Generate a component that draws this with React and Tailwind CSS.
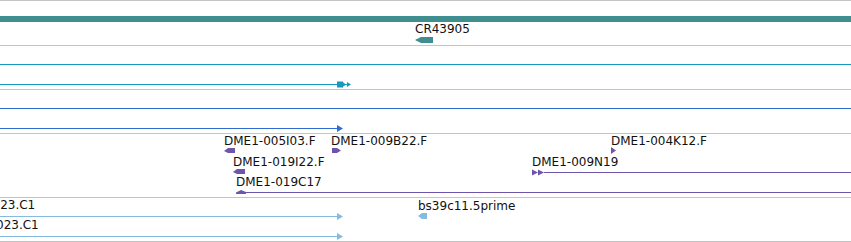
import React from 'react';

// feature label on the track canvas
function Label({ className, children }) {
  return (
    <div className={'absolute whitespace-nowrap text-[12px] leading-[12px] text-[#111] ' + className}>
      {children}
    </div>
  );
}

// small feature glyphs (arrows) drawn as svg
function Glyph({ className, w, h, fill, children }) {
  return (
    <svg className={'absolute ' + className} width={w} height={h} viewBox={`0 0 ${w} ${h}`} fill={fill}>
      {children}
    </svg>
  );
}

function Track({ className, children }) {
  return <div className={'relative overflow-hidden border-b border-[#c4c4c4] ' + className}>{children}</div>;
}

export default function App() {
  return (
    <div className="flex flex-col w-[851px] h-[242px] overflow-hidden bg-white border-t border-[#c4c4c4] font-['DejaVu_Sans',sans-serif]">
      <Track className="h-[45px]">
        <div className="absolute inset-x-0 top-[15px] h-[6px] bg-[#408f90]" />
        <Label className="left-[415px] top-[22px]">CR43905</Label>
        <Glyph className="left-[415px] top-[36px]" w={18} h={6} fill="#408f90">
          <polygon points="0,3 6,0 18,0 18,6 6,6" />
        </Glyph>
      </Track>

      <Track className="h-[44px]">
        <div className="absolute inset-x-0 top-[18px] h-px bg-[#1499bf]" />
        <div className="absolute left-0 w-[338px] top-[38px] h-px bg-[#1499bf]" />
        <Glyph className="left-[337px] top-[35px]" w={15} h={7} fill="#1499bf">
          <rect x="0" y="0.5" width="6" height="6" />
          <polygon points="5,0.5 9,3.5 5,6.5" />
          <polygon points="10,1 14,3.5 10,6" />
          <rect x="8" y="3" width="3" height="1" />
        </Glyph>
      </Track>

      <Track className="h-[44px]">
        <div className="absolute inset-x-0 top-[18px] h-px bg-[#2f6cd1]" />
        <div className="absolute left-0 w-[338px] top-[38px] h-px bg-[#2f6cd1]" />
        <Glyph className="left-[337px] top-[35px]" w={6} h={7} fill="#2f6cd1">
          <polygon points="0,0 6,3.5 0,7" />
        </Glyph>
      </Track>

      <Track className="h-[64px]">
        <Label className="left-[224px] top-[1px]">DME1-005I03.F</Label>
        <Glyph className="left-[224px] top-[14px]" w={11} h={6} fill="#6f55a9">
          <polygon points="0,3 4,0 11,0 11,5 4,5" />
        </Glyph>
        <Label className="left-[331px] top-[1px]">DME1-009B22.F</Label>
        <Glyph className="left-[332px] top-[14px]" w={9} h={6} fill="#6f55a9">
          <polygon points="0,0 5,0 9,2.5 5,5 0,5" />
        </Glyph>
        <Label className="left-[611px] top-[1px]">DME1-004K12.F</Label>
        <Glyph className="left-[611px] top-[13px]" w={5} h={7} fill="#6f55a9">
          <polygon points="0,0 5,3.5 0,7" />
        </Glyph>

        <Label className="left-[233px] top-[22px]">DME1-019I22.F</Label>
        <Glyph className="left-[233px] top-[35px]" w={12} h={6} fill="#6f55a9">
          <polygon points="0,3 4,0 12,0 12,5 4,5" />
        </Glyph>
        <Label className="left-[532px] top-[22px]">DME1-009N19</Label>
        <Glyph className="left-[532px] top-[35px]" w={14} h={7} fill="#6f55a9">
          <polygon points="0,0.5 6,3.5 0,6.5" />
          <polygon points="6,0.5 12,3.5 6,6.5" />
        </Glyph>
        <div className="absolute left-[544px] right-0 top-[38px] h-px bg-[#6f55a9]" />

        <Label className="left-[236px] top-[42px]">DME1-019C17</Label>
        <Glyph className="left-[236px] top-[55px]" w={10} h={6} fill="#6f55a9">
          <polygon points="0,3.5 5,1 10,3 10,5 0,5" />
        </Glyph>
        <div className="absolute left-[244px] right-0 top-[58px] h-px bg-[#6f55a9]" />
      </Track>

      <Track className="h-[44px]">
        <Label className="left-[-7.5px] top-[1px]">023.C1</Label>
        <div className="absolute left-0 w-[338px] top-[18px] h-px bg-[#86bbe0]" />
        <Glyph className="left-[337px] top-[15px]" w={6} h={7} fill="#86bbe0">
          <polygon points="0,0 6,3.5 0,7" />
        </Glyph>
        <Label className="left-[-4px] top-[21px]">023.C1</Label>
        <div className="absolute left-0 w-[338px] top-[38px] h-px bg-[#86bbe0]" />
        <Glyph className="left-[337px] top-[35px]" w={6} h={7} fill="#86bbe0">
          <polygon points="0,0 6,3.5 0,7" />
        </Glyph>
        <Label className="left-[418px] top-[2px]">bs39c11.5prime</Label>
        <Glyph className="left-[418px] top-[15px]" w={9} h={6} fill="#86bbe0">
          <polygon points="0,3 4,0 9,0 9,6 4,6" />
        </Glyph>
      </Track>
    </div>
  );
}
